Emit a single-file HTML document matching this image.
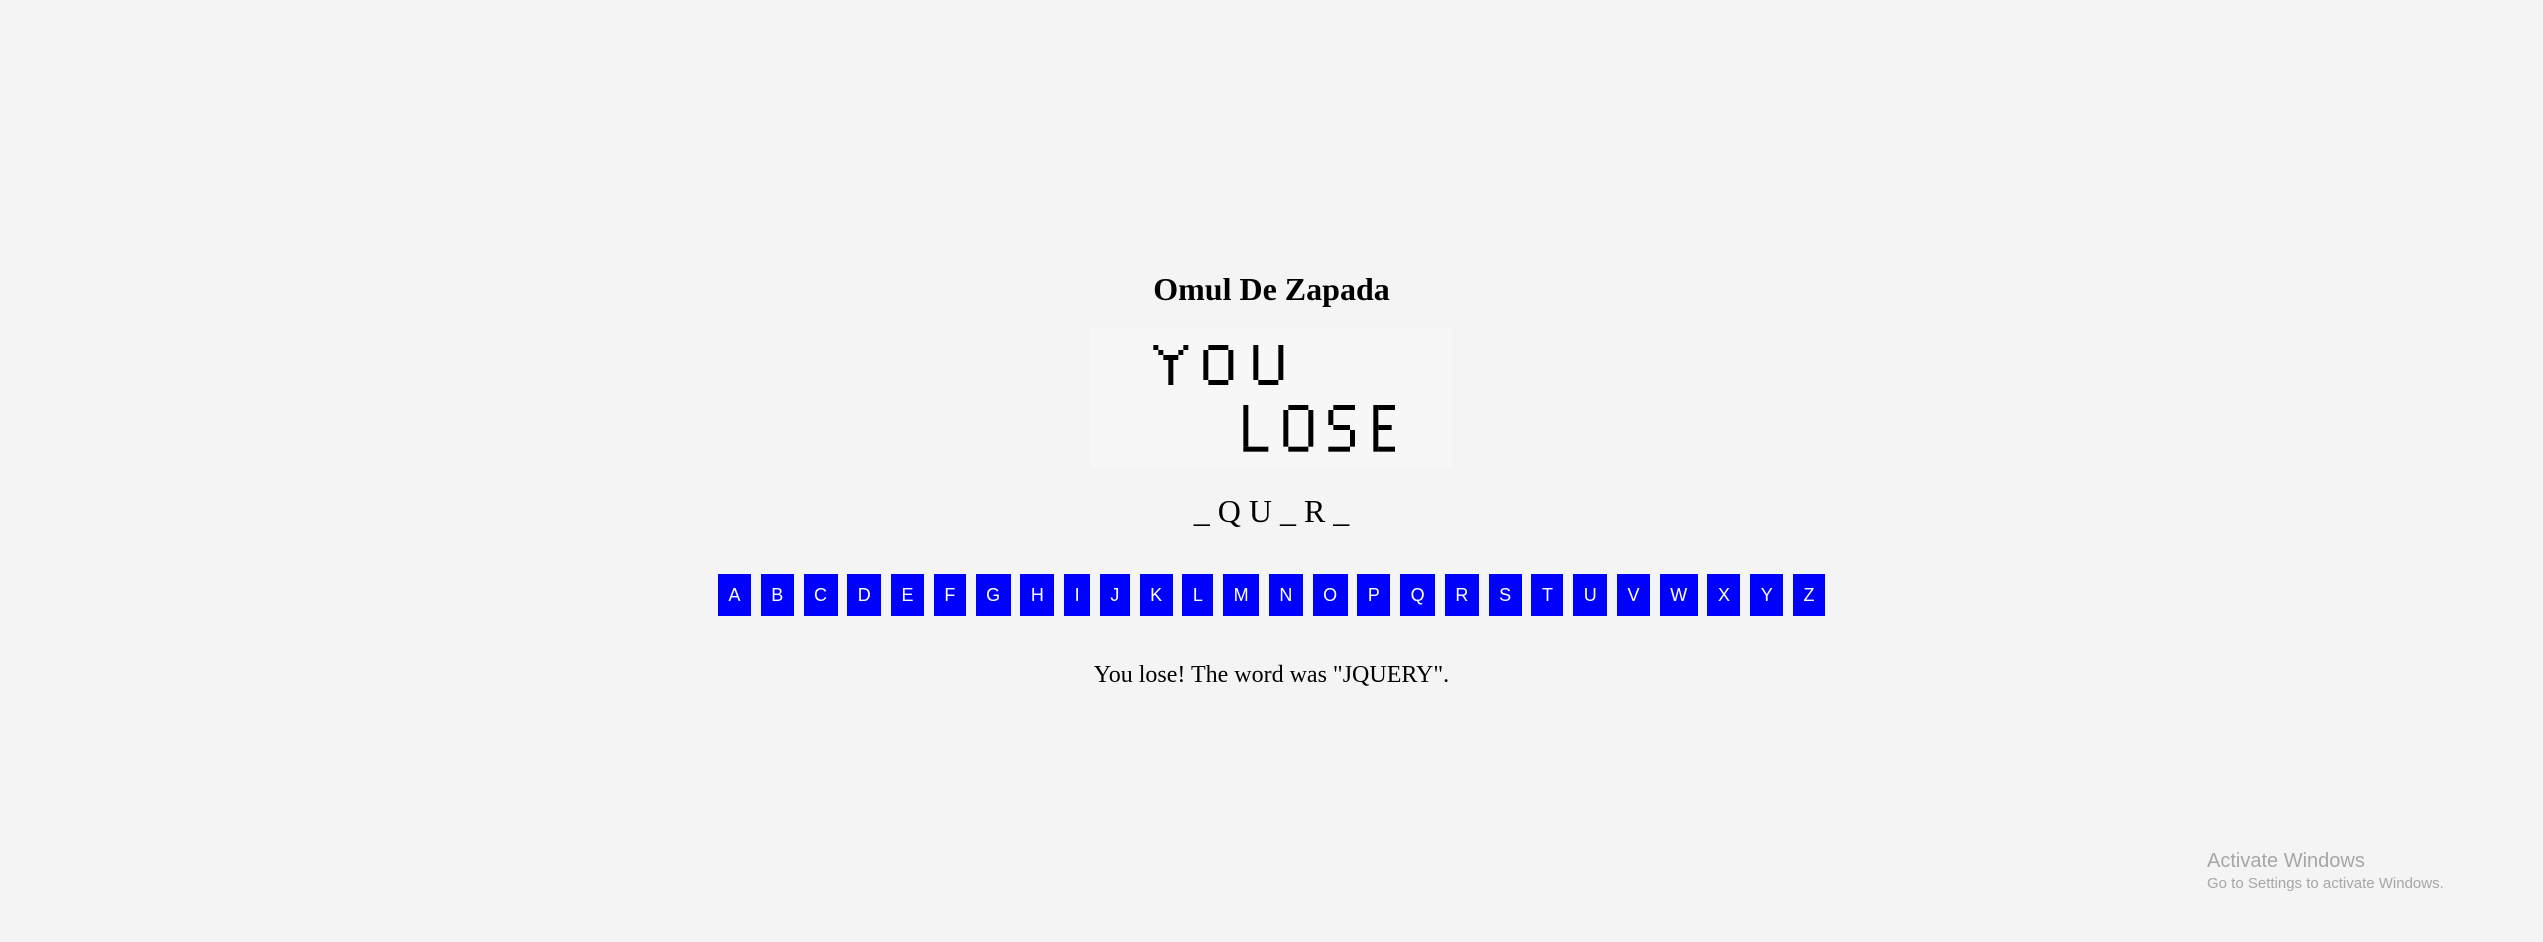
<!DOCTYPE html>
<html><head><style>
html,body{margin:0;padding:0;background:#f4f4f4;width:2543px;height:942px;overflow:hidden;position:relative}
.t{position:absolute;left:0;width:2543px;text-align:center;font-family:"Liberation Serif",serif;color:#000;white-space:pre}
.btns{position:absolute;top:574px;left:0;width:2543px;display:flex;justify-content:center;gap:9.75px}
.btns span{display:block;height:42px;line-height:42px;padding:0 10.5px;background:#00f;color:#fff;font-family:"Liberation Sans",sans-serif;font-size:18px}
.aw{position:absolute;left:2207px;color:#a6a6a6;font-family:"Liberation Sans",sans-serif;white-space:nowrap}
</style></head><body>
<div class="t" style="top:269px;font-size:32px;font-weight:bold;line-height:40px">Omul De Zapada</div>
<div style="position:absolute;left:1091px;top:328px;width:361px;height:139px;background:#f7f7f7"></div>
<svg style="position:absolute;left:1145px;top:335px" width="250" height="125" viewBox="0 0 750 375">
<g fill="#000">
<rect x="25" y="30" width="15" height="15"/><rect x="40" y="45" width="15" height="15"/><rect x="55" y="60" width="45" height="15"/><rect x="100" y="45" width="15" height="15"/><rect x="115" y="30" width="15" height="15"/><rect x="70" y="75" width="15" height="75"/>
<rect x="175" y="45" width="15" height="90"/><rect x="190" y="30" width="60" height="15"/><rect x="250" y="45" width="15" height="90"/><rect x="190" y="135" width="60" height="15"/>
<rect x="325" y="30" width="15" height="105"/><rect x="400" y="30" width="15" height="105"/><rect x="340" y="135" width="60" height="15"/>
<rect x="295" y="210" width="15" height="125"/><rect x="295" y="335" width="75" height="15"/>
<rect x="415" y="225" width="15" height="110"/><rect x="430" y="210" width="60" height="15"/><rect x="490" y="225" width="15" height="110"/><rect x="430" y="335" width="60" height="15"/>
<rect x="565" y="210" width="65" height="15"/><rect x="550" y="225" width="15" height="45"/><rect x="565" y="270" width="50" height="15"/><rect x="615" y="285" width="15" height="50"/><rect x="550" y="335" width="65" height="15"/>
<rect x="685" y="210" width="15" height="140"/><rect x="700" y="210" width="50" height="15"/><rect x="700" y="270" width="40" height="15"/><rect x="700" y="335" width="50" height="15"/>
</g></svg>
<div class="t" style="top:491px;font-size:32px;line-height:40px">_ Q U _ R _</div>
<div class="btns"><span>A</span><span>B</span><span>C</span><span>D</span><span>E</span><span>F</span><span>G</span><span>H</span><span>I</span><span>J</span><span>K</span><span>L</span><span>M</span><span>N</span><span>O</span><span>P</span><span>Q</span><span>R</span><span>S</span><span>T</span><span>U</span><span>V</span><span>W</span><span>X</span><span>Y</span><span>Z</span></div>
<div class="t" style="top:660px;font-size:24px;line-height:30px">You lose! The word was "JQUERY".</div>
<div class="aw" style="top:850px;font-size:20px">Activate Windows</div>
<div class="aw" style="top:875px;font-size:15px">Go to Settings to activate Windows.</div>
</body></html>
